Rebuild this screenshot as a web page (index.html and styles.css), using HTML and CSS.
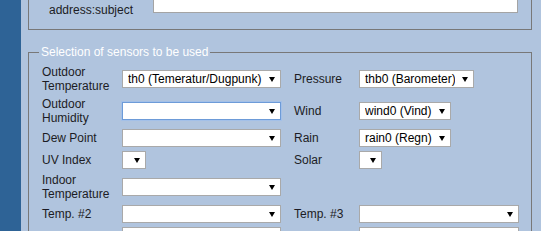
FILE: index.html
```html
<!DOCTYPE html>
<html>
<head>
<meta charset="utf-8">
<link rel="stylesheet" href="styles.css">
</head>
<body>
<div class="page">
  <div class="side"></div>
  <div class="main">
    <fieldset class="box box-mail">
      <div class="mail-row">
        <div class="mail-label">E-mail<br>address:subject</div>
        <div class="mail-input"></div>
      </div>
    </fieldset>
    <fieldset class="box box-sensors">
      <legend>Selection of sensors to be used</legend>
      <div class="grid">
        <div class="lbl">Outdoor Temperature</div>
        <div class="cell"><span class="sel w159"><select><option>th0 (Temeratur/Dugpunk)</option></select></span></div>
        <div class="lbl lbl2">Pressure</div>
        <div class="cell"><span class="sel w115"><select><option>thb0 (Barometer)</option></select></span></div>

        <div class="lbl">Outdoor Humidity</div>
        <div class="cell"><span class="sel w159 focus"><select><option></option></select></span></div>
        <div class="lbl lbl2">Wind</div>
        <div class="cell"><span class="sel w92"><select><option>wind0 (Vind)</option></select></span></div>

        <div class="lbl">Dew Point</div>
        <div class="cell"><span class="sel w159"><select><option></option></select></span></div>
        <div class="lbl lbl2">Rain</div>
        <div class="cell"><span class="sel w92"><select><option>rain0 (Regn)</option></select></span></div>

        <div class="lbl">UV Index</div>
        <div class="cell"><span class="sel w24"><select><option></option></select></span></div>
        <div class="lbl lbl2">Solar</div>
        <div class="cell"><span class="sel w23"><select><option></option></select></span></div>

        <div class="lbl">Indoor Temperature</div>
        <div class="cell"><span class="sel w159"><select><option></option></select></span></div>
        <div class="lbl lbl2"></div>
        <div class="cell"></div>

        <div class="lbl">Temp. #2</div>
        <div class="cell"><span class="sel w159"><select><option></option></select></span></div>
        <div class="lbl lbl2">Temp. #3</div>
        <div class="cell"><span class="sel w160"><select><option></option></select></span></div>

        <div class="lbl"></div>
        <div class="cell"><span class="sel w159"><select><option></option></select></span></div>
        <div class="lbl lbl2"></div>
        <div class="cell"><span class="sel w160"><select><option></option></select></span></div>
      </div>
    </fieldset>
  </div>
</div>
</body>
</html>
```

FILE: styles.css
```css
html, body {
  margin: 0;
  padding: 0;
  background: #ffffff;
}
body {
  font-family: "Liberation Sans", Arial, sans-serif;
  font-size: 12px;
  line-height: 14px;
  color: #1c1c24;
  overflow: hidden;
}
.page {
  display: flex;
  align-items: stretch;
  height: 231px;
  overflow: hidden;
}
.side {
  width: 21px;
  flex: none;
  background: #2e6396;
}
.main {
  width: 520px;
  flex: none;
  background: #b0c4de;
  padding: 0 9px 0 7px;
  box-sizing: border-box;
}
.box {
  margin: 0;
  border: 1px solid #787878;
  min-width: 0;
}
.box-mail {
  margin-top: -34px;
  padding: 6px 13px 12px 20px;
}
.mail-row {
  display: flex;
  align-items: flex-end;
}
.mail-label {
  width: 104px;
  flex: none;
}
.mail-input {
  flex: 1;
  height: 40px;
  margin-bottom: 4px;
  background: #ffffff;
  border: 1px solid #a4a4a4;
  box-sizing: border-box;
}
.box-sensors {
  margin-top: 15px;
  padding: 4px 12px 10px 10px;
}
.box-sensors legend {
  padding: 0 2px;
  color: #ffffff;
  font-size: 12px;
  line-height: 14px;
}
.grid {
  display: grid;
  grid-template-columns: 83px 169px 68px auto;
}
.lbl {
  padding: 2px 0 2px 3px;
  align-self: center;
}
.cell {
  display: flex;
  align-items: center;
  padding: 2px 0;
}
.sel {
  position: relative;
  display: inline-block;
  height: 18px;
}
.sel select {
  -webkit-appearance: none;
  appearance: none;
  width: 100%;
  height: 18px;
  margin: 0;
  padding: 0 18px 0 5px;
  box-sizing: border-box;
  border: 1px solid #a9a9a9;
  border-radius: 0;
  background: #ffffff;
  font-family: "Liberation Sans", Arial, sans-serif;
  font-size: 12px;
  color: #000000;
  outline: none;
}
.sel::after {
  content: "";
  position: absolute;
  right: 6px;
  top: 7px;
  width: 0;
  height: 0;
  border-left: 3px solid transparent;
  border-right: 3px solid transparent;
  border-top: 5px solid #000000;
  pointer-events: none;
}
.sel.focus select {
  border-color: #6d9bd8;
  box-shadow: 0 0 0 1px #a3c0e8;
}
.w159 { width: 159px; }
.w160 { width: 160px; }
.w115 { width: 115px; }
.w92 { width: 92px; }
.w24 { width: 24px; }
.w23 { width: 23px; }
.w24 select, .w23 select { padding: 0; }
```
